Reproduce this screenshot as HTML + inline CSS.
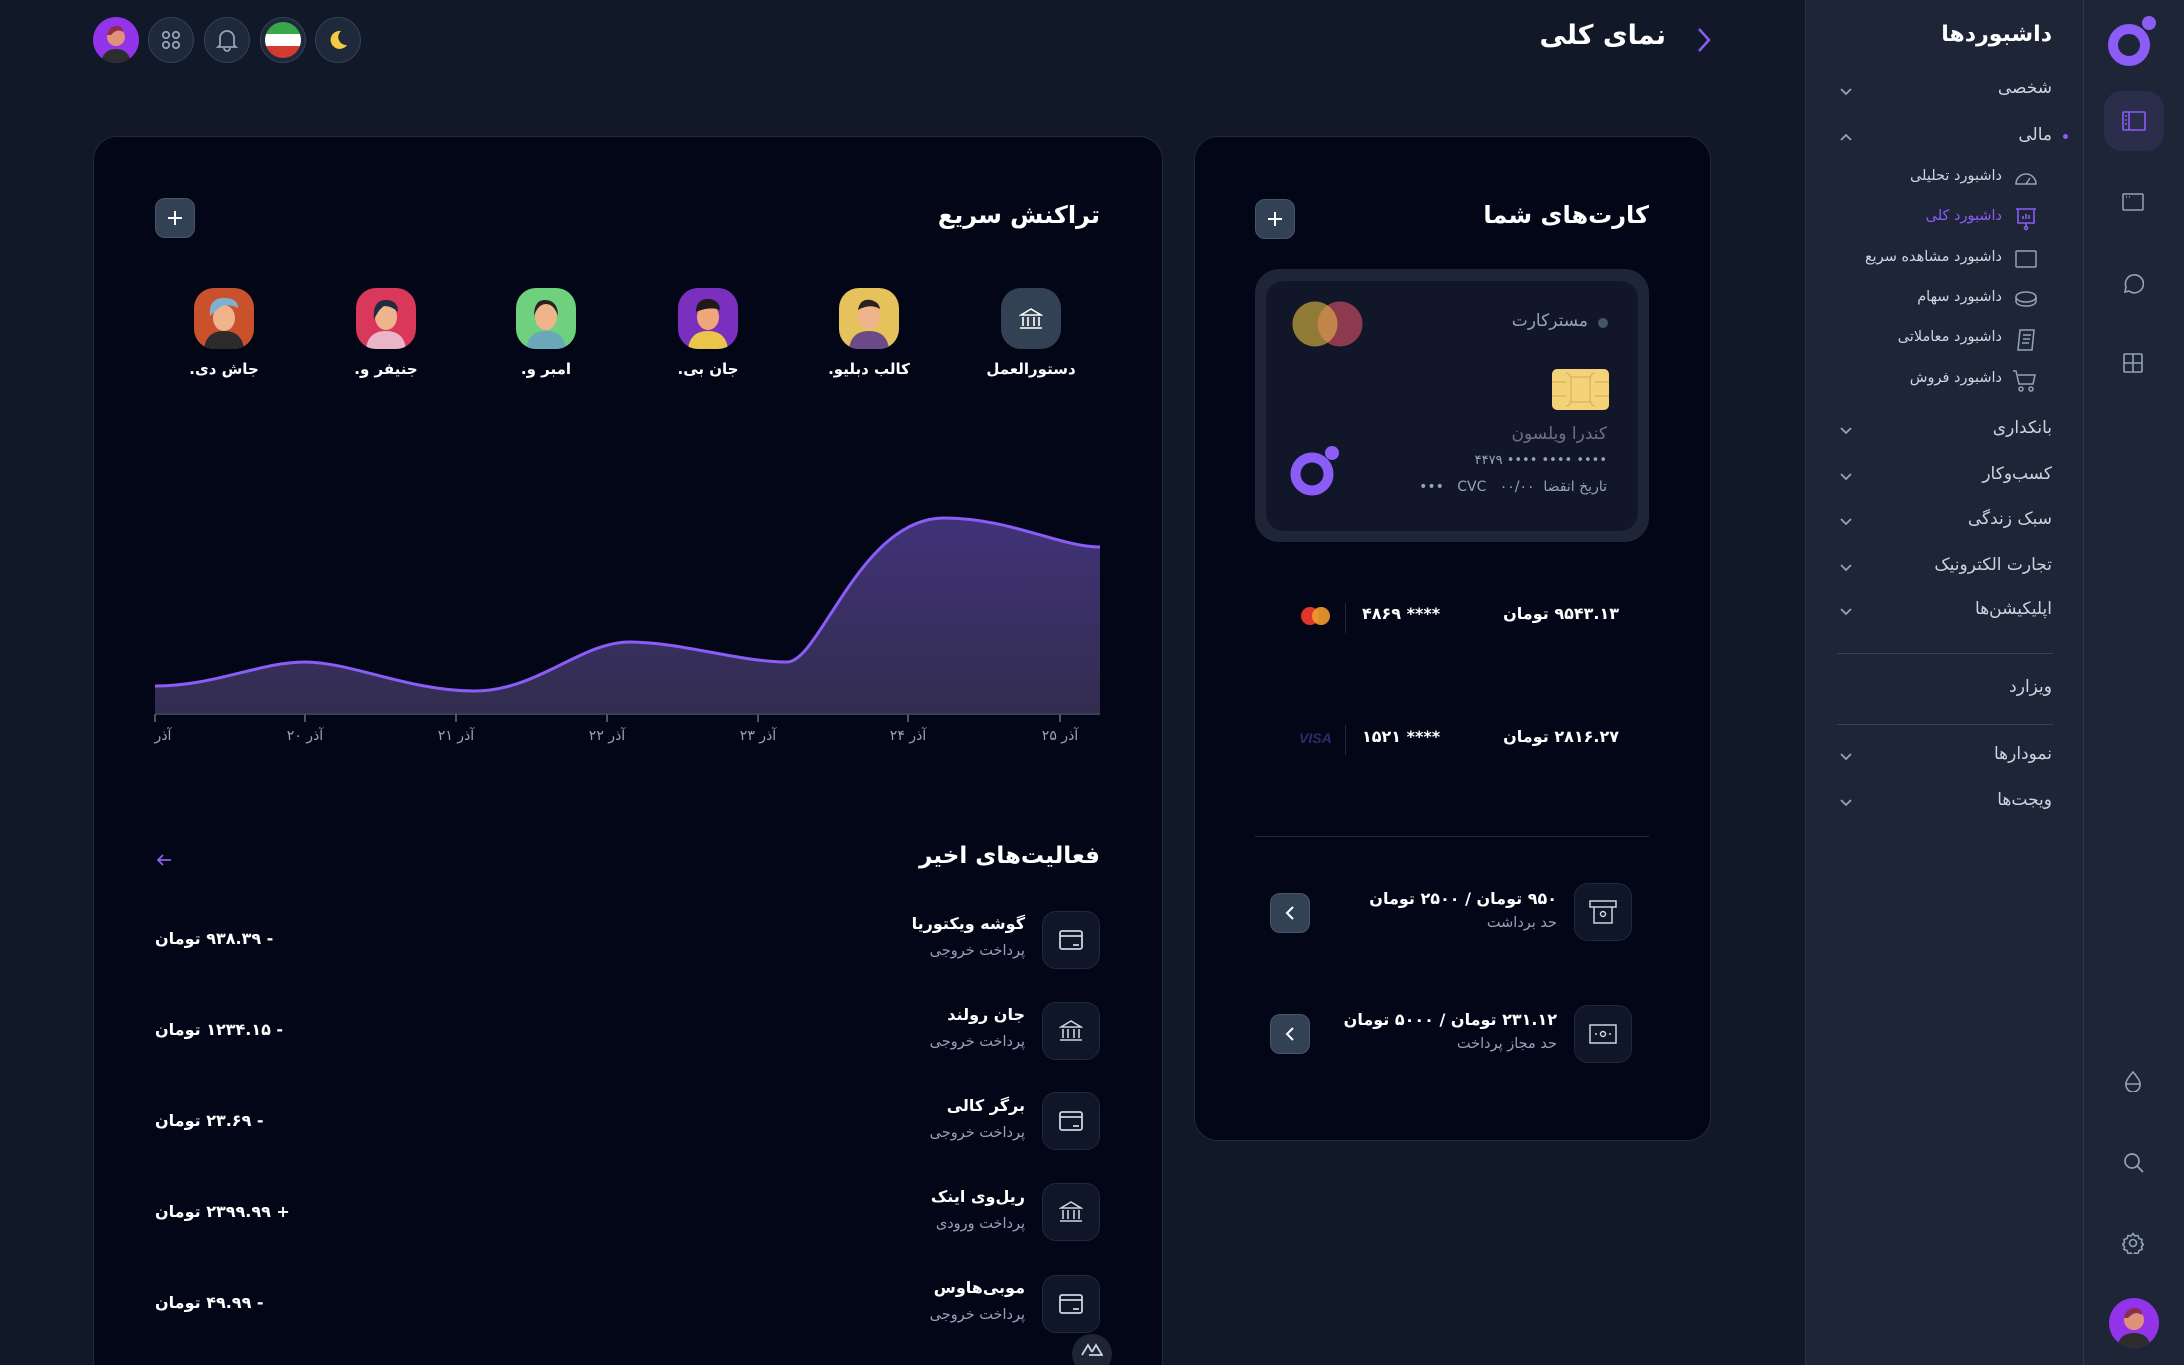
<!DOCTYPE html>
<html><head><meta charset="utf-8"><style>
*{margin:0;padding:0;box-sizing:border-box}
html{width:2184px;height:1365px;overflow:hidden}
body{width:2184px;height:1365px;background:#111827;overflow:hidden;position:relative;font-family:"DejaVu Sans","Liberation Sans",sans-serif;color:#fff}
.a{position:absolute;white-space:nowrap}
.r{direction:rtl}
.card{position:absolute;background:#030617;border:1px solid #1e293b;border-radius:24px}
.btn{position:absolute;width:40px;height:40px;border-radius:10px;background:#334155;border:1px solid #475569;display:flex;align-items:center;justify-content:center}
.circ{position:absolute;width:46px;height:46px;border-radius:50%;background:#1e293b;border:1px solid #334155;display:flex;align-items:center;justify-content:center}
.ico{position:absolute;width:58px;height:58px;border-radius:14px;background:#0f1627;border:1px solid #1e293b;display:flex;align-items:center;justify-content:center}
.sb{color:#cbd5e1;font-size:17px}
.sub{color:#94a3b8;font-size:14.5px}
.chev{position:absolute;left:1838px;width:16px;height:16px}
.av{position:absolute;width:60px;height:61px;border-radius:20px;overflow:hidden}
.lab{font-size:16px;font-weight:bold;transform:translateX(50%)}
.ax{font-size:14px;color:#9ca3af;transform:translateX(-50%)}
</style></head><body>

<!-- top bar -->
<div class="circ" style="left:93px;top:17px;background:#9333ea;border:none;overflow:hidden">
 <svg width="46" height="46"><circle cx="23" cy="20" r="9" fill="#e0917a"/><path d="M14 18q2-10 12-9 4 1 4 6-6-4-12 3z" fill="#8b2f4f"/><path d="M8 46q2-14 15-14 13 0 15 14z" fill="#2d2d2d"/></svg></div>
<div class="circ" style="left:148px;top:17px"><svg width="20" height="20" fill="none" stroke="#94a3b8" stroke-width="1.8"><circle cx="5" cy="5" r="3.2"/><circle cx="15" cy="5" r="3.2"/><circle cx="5" cy="15" r="3.2"/><circle cx="15" cy="15" r="3.2"/></svg></div>
<div class="circ" style="left:204px;top:17px"><svg width="22" height="24" fill="none" stroke="#94a3b8" stroke-width="1.8"><path d="M4 17V10a7 7 0 0114 0v7l2 2H2z"/><path d="M8 20a3 3 0 006 0"/></svg></div>
<div class="circ" style="left:260px;top:17px"><div style="width:36px;height:36px;border-radius:50%;overflow:hidden"><div style="height:12px;background:#3aa64a"></div><div style="height:12px;background:#fff"></div><div style="height:12px;background:#d43a2f"></div></div></div>
<div class="circ" style="left:315px;top:17px"><svg width="22" height="22"><path d="M14 2a9 9 0 1 0 6 14 8 8 0 0 1-6-14z" fill="#f6c945"/></svg></div>

<div class="a r" style="right:518px;top:20px;font-size:27px;font-weight:bold">نمای کلی</div>
<svg class="a" style="left:1695px;top:26px" width="18" height="28" fill="none" stroke="#8b5cf6" stroke-width="2.5"><path d="M4 3l10 11-10 11"/></svg>

<!-- left card -->
<div class="card" style="left:93px;top:136px;width:1070px;height:1260px"></div>
<div class="a r" style="right:1084px;top:201px;font-size:24px;font-weight:bold">تراکنش سریع</div>
<div class="btn" style="left:155px;top:198px"><svg width="16" height="16" stroke="#fff" stroke-width="2"><path d="M8 1v14M1 8h14"/></svg></div>

<div class="av" style="left:1001px;top:288px;background:#334155;display:flex;align-items:center;justify-content:center"><svg width="24" height="22" fill="none" stroke="#fff" stroke-width="1.6"><path d="M2 7L12 1l10 6zM4 9v9M9 9v9M15 9v9M20 9v9M1 20h22"/></svg></div>
<div class="av" style="left:839px;top:288px;background:#e5c25c"><svg width="60" height="61"><path d="M10 61q2-18 20-18 18 0 20 18z" fill="#6b4a8a"/><ellipse cx="30" cy="28" rx="11" ry="13" fill="#f0b48c"/><path d="M19 22q2-12 13-10 8 2 9 9-10-6-22 1z" fill="#2b2220"/></svg></div>
<div class="av" style="left:678px;top:288px;background:#7b2fbe"><svg width="60" height="61"><path d="M10 61q2-18 20-18 18 0 20 18z" fill="#e9c54a"/><ellipse cx="30" cy="29" rx="11" ry="13" fill="#f0a77c"/><path d="M18 24q0-14 14-13 10 2 10 11-10-4-24 2z" fill="#1f1a1a"/></svg></div>
<div class="av" style="left:516px;top:288px;background:#6fd17d"><svg width="60" height="61"><path d="M10 61q2-18 20-18 18 0 20 18z" fill="#6aa7b8"/><ellipse cx="30" cy="29" rx="11" ry="13" fill="#f0b48c"/><path d="M18 28q0-17 12-16 12 1 12 16-4-12-12-12-8 0-12 12z" fill="#2b2220"/></svg></div>
<div class="av" style="left:356px;top:288px;background:#d9385a"><svg width="60" height="61"><path d="M10 61q2-18 20-18 18 0 20 18z" fill="#eab5c8"/><ellipse cx="30" cy="29" rx="11" ry="13" fill="#f0b48c"/><path d="M18 32q-2-20 12-20 12 0 12 12-6-6-14-6-6 4-10 14z" fill="#1f2a44"/></svg></div>
<div class="av" style="left:194px;top:288px;background:#c9512b"><svg width="60" height="61"><path d="M10 61q2-18 20-18 18 0 20 18z" fill="#2b2b2b"/><ellipse cx="30" cy="30" rx="11" ry="13" fill="#f0b48c"/><path d="M16 28q-2-18 14-18 14 0 14 10-8-4-16-2-6 4-12 10z" fill="#7fb0cf"/></svg></div>

<div class="a r lab" style="right:1153px;top:360px;font-size:15px">دستورالعمل</div>
<div class="a r lab" style="right:1315px;top:360px;font-size:15px">کالب دبلیو.</div>
<div class="a r lab" style="right:1476px;top:360px;font-size:15px">جان بی.</div>
<div class="a r lab" style="right:1638px;top:360px;font-size:15px">امبر و.</div>
<div class="a r lab" style="right:1798px;top:360px;font-size:15px">جنیفر و.</div>
<div class="a r lab" style="right:1960px;top:360px;font-size:15px">جاش دی.</div>

<svg class="a" style="left:0;top:0" width="1200" height="760">
<defs><linearGradient id="g" x1="0" y1="0" x2="0" y2="1"><stop offset="0" stop-color="#4c3a8a" stop-opacity=".85"/><stop offset="1" stop-color="#3a3458" stop-opacity=".85"/></linearGradient></defs>
<path d="M155 686C215 686 260 662 305 662S410 691 474 691 580 642 630 642 740 662 787 662C820 662 860 518 944 518 1010 518 1060 547 1100 547V713H155z" fill="url(#g)"/>
<path d="M155 686C215 686 260 662 305 662S410 691 474 691 580 642 630 642 740 662 787 662C820 662 860 518 944 518 1010 518 1060 547 1100 547" fill="none" stroke="#8b5cf6" stroke-width="3"/>
<path d="M155 714H1100" stroke="#374151" stroke-width="2"/>
<g stroke="#4b5563" stroke-width="2"><path d="M155 714v8M305 714v8M456 714v8M607 714v8M758 714v8M908 714v8M1060 714v8"/></g>
</svg>
<div class="a ax r" style="left:163px;top:728px">آذر</div>
<div class="a ax r" style="left:305px;top:728px">آذر ۲۰</div>
<div class="a ax r" style="left:456px;top:728px">آذر ۲۱</div>
<div class="a ax r" style="left:607px;top:728px">آذر ۲۲</div>
<div class="a ax r" style="left:758px;top:728px">آذر ۲۳</div>
<div class="a ax r" style="left:908px;top:728px">آذر ۲۴</div>
<div class="a ax r" style="left:1060px;top:728px">آذر ۲۵</div>

<div class="a r" style="right:1084px;top:843px;font-size:23px;font-weight:bold">فعالیت‌های اخیر</div>
<svg class="a" style="left:156px;top:852px" width="16" height="16" fill="none" stroke="#8b5cf6" stroke-width="1.8"><path d="M15 8H2M7 3L2 8l5 5"/></svg>

<!-- activity rows -->
<div class="ico" style="left:1042px;top:911px"><svg width="24" height="20" fill="none" stroke="#cbd5e1" stroke-width="1.8"><rect x="1" y="1" width="22" height="18" rx="2"/><path d="M1 6h22M14 15h6"/></svg></div>
<div class="ico" style="left:1042px;top:1002px"><svg width="24" height="22" fill="none" stroke="#cbd5e1" stroke-width="1.6"><path d="M2 7L12 1l10 6zM4 9v9M9 9v9M15 9v9M20 9v9M1 20h22"/></svg></div>
<div class="ico" style="left:1042px;top:1092px"><svg width="24" height="20" fill="none" stroke="#cbd5e1" stroke-width="1.8"><rect x="1" y="1" width="22" height="18" rx="2"/><path d="M1 6h22M14 15h6"/></svg></div>
<div class="ico" style="left:1042px;top:1183px"><svg width="24" height="22" fill="none" stroke="#cbd5e1" stroke-width="1.6"><path d="M2 7L12 1l10 6zM4 9v9M9 9v9M15 9v9M20 9v9M1 20h22"/></svg></div>
<div class="ico" style="left:1042px;top:1275px"><svg width="24" height="20" fill="none" stroke="#cbd5e1" stroke-width="1.8"><rect x="1" y="1" width="22" height="18" rx="2"/><path d="M1 6h22M14 15h6"/></svg></div>

<div class="a r" style="right:1159px;top:914px;font-size:16px;font-weight:bold">گوشه ویکتوریا</div><div class="a r sub" style="right:1159px;top:943px">پرداخت خروجی</div>
<div class="a r" style="right:1159px;top:1005px;font-size:16px;font-weight:bold">جان رولند</div><div class="a r sub" style="right:1159px;top:1034px">پرداخت خروجی</div>
<div class="a r" style="right:1159px;top:1096px;font-size:16px;font-weight:bold">برگر کالی</div><div class="a r sub" style="right:1159px;top:1125px">پرداخت خروجی</div>
<div class="a r" style="right:1159px;top:1187px;font-size:16px;font-weight:bold">ریل‌وی اینک</div><div class="a r sub" style="right:1159px;top:1216px">پرداخت ورودی</div>
<div class="a r" style="right:1159px;top:1278px;font-size:16px;font-weight:bold">موبی‌هاوس</div><div class="a r sub" style="right:1159px;top:1307px">پرداخت خروجی</div>

<div class="a r" style="left:155px;top:929px;font-size:16px;font-weight:bold">- ۹۳۸.۳۹ تومان</div>
<div class="a r" style="left:155px;top:1020px;font-size:16px;font-weight:bold">- ۱۲۳۴.۱۵ تومان</div>
<div class="a r" style="left:155px;top:1111px;font-size:16px;font-weight:bold">- ۲۳.۶۹ تومان</div>
<div class="a r" style="left:155px;top:1202px;font-size:16px;font-weight:bold">+ ۲۳۹۹.۹۹ تومان</div>
<div class="a r" style="left:155px;top:1293px;font-size:16px;font-weight:bold">- ۴۹.۹۹ تومان</div>
<div class="a" style="left:1072px;top:1334px;width:40px;height:40px;border-radius:50%;background:#1e2533;display:flex;justify-content:center;padding-top:8px"><svg width="22" height="14" fill="none" stroke="#cbd5e1" stroke-width="1.8"><path d="M1 13L7 3l4 7M8 13h13L15 3l-4 7"/></svg></div>

<!-- right card -->
<div class="card" style="left:1194px;top:136px;width:517px;height:1005px"></div>
<div class="a r" style="right:535px;top:201px;font-size:24px;font-weight:bold">کارت‌های شما</div>
<div class="btn" style="left:1255px;top:199px"><svg width="16" height="16" stroke="#fff" stroke-width="2"><path d="M8 1v14M1 8h14"/></svg></div>

<div class="a" style="left:1255px;top:269px;width:394px;height:273px;border-radius:24px;background:#1e2536"></div>
<div class="a" style="left:1266px;top:281px;width:372px;height:250px;border-radius:18px;background:#111729"></div>
<svg class="a" style="left:1290px;top:300px" width="76" height="48"><circle cx="25" cy="24" r="22.5" fill="#8f7a36"/><circle cx="50" cy="24" r="22.5" fill="#8e3a4e"/><path d="M37.5 5.3a22.5 22.5 0 0 1 0 37.4 22.5 22.5 0 0 1 0-37.4z" fill="#c2864a"/></svg>
<div class="a" style="left:1598px;top:318px;width:10px;height:10px;border-radius:50%;background:#475569"></div>
<div class="a r" style="right:596px;top:311px;font-size:17px;color:#94a3b8">مسترکارت</div>
<svg class="a" style="left:1552px;top:369px" width="57" height="41"><rect width="57" height="41" rx="5" fill="#f4d27a"/><g fill="none" stroke="#d8b25a" stroke-width="1.2"><path d="M0 13h14M0 27h14M43 13h14M43 27h14M14 4q5 0 5 9v15q0 9-5 9M43 4q-5 0-5 9v15q0 9 5 9M19 8h19M19 33h19"/></g></svg>
<div class="a r" style="right:577px;top:424px;font-size:17px;color:#6b7280">کندرا ویلسون</div>
<div class="a r" style="right:577px;top:453px;font-size:13px;color:#94a3b8">•••• •••• •••• ۴۴۷۹</div>
<div class="a r" style="right:577px;top:479px;font-size:14px;color:#94a3b8">تاریخ انقضا &nbsp;۰۰/۰۰ &nbsp; CVC &nbsp; •••</div>
<svg class="a" style="left:1290px;top:444px" width="52" height="52"><circle cx="22" cy="30" r="16.5" fill="none" stroke="#8b5cf6" stroke-width="10"/><circle cx="42" cy="9" r="7" fill="#8b5cf6"/></svg>

<div class="a r" style="right:565px;top:604px;font-size:16px;font-weight:bold">۹۵۴۳.۱۳ تومان</div>
<div class="a r" style="left:1362px;top:604px;font-size:16px;font-weight:bold">**** ۴۸۶۹</div>
<div class="a" style="left:1345px;top:603px;width:1px;height:30px;background:#1e293b"></div>
<svg class="a" style="left:1300px;top:605px" width="32" height="22"><circle cx="10" cy="11" r="9" fill="#e0362c"/><circle cx="21" cy="11" r="9" fill="#f39c2f" fill-opacity=".9"/></svg>
<div class="a r" style="right:565px;top:727px;font-size:16px;font-weight:bold">۲۸۱۶.۲۷ تومان</div>
<div class="a r" style="left:1362px;top:727px;font-size:16px;font-weight:bold">**** ۱۵۲۱</div>
<div class="a" style="left:1345px;top:725px;width:1px;height:30px;background:#1e293b"></div>
<div class="a" style="left:1299px;top:730px;font-family:'Liberation Sans';font-style:italic;font-weight:bold;font-size:14px;color:#2f2a6b">VISA</div>

<div class="a" style="left:1255px;top:836px;width:394px;height:1px;background:#1e293b"></div>

<div class="ico" style="left:1574px;top:883px;background:#0f1627"><svg width="28" height="24" fill="none" stroke="#cbd5e1" stroke-width="1.5"><path d="M1 1h26v6H1zM5 7v16h18V7"/><circle cx="14" cy="14" r="2.5"/></svg></div>
<div class="a r" style="right:627px;top:889px;font-size:16px;font-weight:bold">۹۵۰ تومان / ۲۵۰۰ تومان</div>
<div class="a r sub" style="right:627px;top:915px">حد برداشت</div>
<div class="btn" style="left:1270px;top:893px"><svg width="10" height="14" fill="none" stroke="#fff" stroke-width="2"><path d="M8 1L2 7l6 6"/></svg></div>

<div class="ico" style="left:1574px;top:1005px"><svg width="28" height="20" fill="none" stroke="#cbd5e1" stroke-width="1.5"><rect x="1" y="1" width="26" height="18"/><circle cx="14" cy="10" r="2.5"/><path d="M6 10h2M20 10h2"/></svg></div>
<div class="a r" style="right:627px;top:1010px;font-size:16px;font-weight:bold">۲۳۱.۱۲ تومان / ۵۰۰۰ تومان</div>
<div class="a r sub" style="right:627px;top:1036px">حد مجاز پرداخت</div>
<div class="btn" style="left:1270px;top:1014px"><svg width="10" height="14" fill="none" stroke="#fff" stroke-width="2"><path d="M8 1L2 7l6 6"/></svg></div>

<!-- sidebar -->
<div class="a" style="left:1805px;top:0;width:379px;height:1365px;background:#1e2536"></div>
<div class="a" style="left:2083px;top:0;width:1px;height:1365px;background:#2f3648"></div>
<div class="a" style="left:1805px;top:0;width:1px;height:1365px;background:#2a3142"></div>
<div class="a r" style="right:132px;top:22px;font-size:22px;font-weight:bold">داشبوردها</div>

<div class="a r sb" style="right:132px;top:78px">شخصی</div>
<div class="a r sb" style="right:132px;top:125px">مالی</div>
<div class="a" style="left:2063px;top:134px;width:5px;height:5px;border-radius:50%;background:#8b5cf6"></div>
<svg class="chev" style="top:83px" fill="none" stroke="#94a3b8" stroke-width="1.8"><path d="M3 6l5 5 5-5"/></svg>
<svg class="chev" style="top:129px" fill="none" stroke="#94a3b8" stroke-width="1.8"><path d="M3 11l5-5 5 5"/></svg>

<div class="a r sub" style="right:182px;top:168px;color:#cbd5e1">داشبورد تحلیلی</div>
<div class="a r sub" style="right:182px;top:208px;color:#8b5cf6">داشبورد کلی</div>
<div class="a r sub" style="right:182px;top:249px;color:#cbd5e1">داشبورد مشاهده سریع</div>
<div class="a r sub" style="right:182px;top:289px;color:#cbd5e1">داشبورد سهام</div>
<div class="a r sub" style="right:182px;top:329px;color:#cbd5e1">داشبورد معاملاتی</div>
<div class="a r sub" style="right:182px;top:370px;color:#cbd5e1">داشبورد فروش</div>
<svg class="a" style="left:2014px;top:168px" width="24" height="20" fill="none" stroke="#94a3b8" stroke-width="1.5"><path d="M2 16a10 10 0 0120 0zM12 16l4-6"/></svg>
<svg class="a" style="left:2014px;top:207px" width="24" height="24" fill="none" stroke="#8b5cf6" stroke-width="1.6"><path d="M2 2h20M4 2v14h16V2M12 16v4"/><circle cx="12" cy="21" r="1.5"/><path d="M9 12v-3M12 12V7M15 12v-4"/></svg>
<svg class="a" style="left:2014px;top:249px" width="24" height="20" fill="none" stroke="#94a3b8" stroke-width="1.5"><rect x="2" y="2" width="20" height="16" rx="1"/></svg>
<svg class="a" style="left:2014px;top:289px" width="24" height="20" fill="none" stroke="#94a3b8" stroke-width="1.5"><ellipse cx="12" cy="8" rx="10" ry="5"/><path d="M2 8v4c0 3 4 5 10 5s10-2 10-5V8"/></svg>
<svg class="a" style="left:2014px;top:328px" width="24" height="24" fill="none" stroke="#94a3b8" stroke-width="1.5"><path d="M6 2h14l-2 20H4zM9 7h8M9 11h7M8 15h7"/></svg>
<svg class="a" style="left:2012px;top:369px" width="26" height="24" fill="none" stroke="#94a3b8" stroke-width="1.5"><path d="M1 2h3l3 13h14l2-9H6"/><circle cx="9" cy="20" r="2"/><circle cx="19" cy="20" r="2"/></svg>

<div class="a r sb" style="right:132px;top:418px">بانکداری</div>
<div class="a r sb" style="right:132px;top:464px">کسب‌وکار</div>
<div class="a r sb" style="right:132px;top:509px">سبک زندگی</div>
<div class="a r sb" style="right:132px;top:555px">تجارت الکترونیک</div>
<div class="a r sb" style="right:132px;top:599px">اپلیکیشن‌ها</div>
<svg class="chev" style="top:422px" fill="none" stroke="#94a3b8" stroke-width="1.8"><path d="M3 6l5 5 5-5"/></svg>
<svg class="chev" style="top:468px" fill="none" stroke="#94a3b8" stroke-width="1.8"><path d="M3 6l5 5 5-5"/></svg>
<svg class="chev" style="top:513px" fill="none" stroke="#94a3b8" stroke-width="1.8"><path d="M3 6l5 5 5-5"/></svg>
<svg class="chev" style="top:559px" fill="none" stroke="#94a3b8" stroke-width="1.8"><path d="M3 6l5 5 5-5"/></svg>
<svg class="chev" style="top:603px" fill="none" stroke="#94a3b8" stroke-width="1.8"><path d="M3 6l5 5 5-5"/></svg>
<div class="a" style="left:1837px;top:653px;width:216px;height:1px;background:#334155"></div>
<div class="a r sb" style="right:132px;top:677px">ویزارد</div>
<div class="a" style="left:1837px;top:724px;width:216px;height:1px;background:#334155"></div>
<div class="a r sb" style="right:132px;top:744px">نمودارها</div>
<div class="a r sb" style="right:132px;top:790px">ویجت‌ها</div>
<svg class="chev" style="top:748px" fill="none" stroke="#94a3b8" stroke-width="1.8"><path d="M3 6l5 5 5-5"/></svg>
<svg class="chev" style="top:794px" fill="none" stroke="#94a3b8" stroke-width="1.8"><path d="M3 6l5 5 5-5"/></svg>

<!-- rail -->
<svg class="a" style="left:2108px;top:14px" width="50" height="54"><circle cx="21" cy="31" r="16" fill="none" stroke="#8b5cf6" stroke-width="10"/><circle cx="41" cy="9" r="7" fill="#8b5cf6"/></svg>
<div class="a" style="left:2104px;top:91px;width:60px;height:60px;border-radius:18px;background:#2b2e4a;display:flex;align-items:center;justify-content:center"><svg width="24" height="20" fill="none" stroke="#8b5cf6" stroke-width="1.6"><rect x="1" y="1" width="22" height="18" rx="1"/><path d="M7 1v18M3 5h2M3 9h2M3 13h2"/></svg></div>
<svg class="a" style="left:2122px;top:192px" width="22" height="20" fill="none" stroke="#94a3b8" stroke-width="1.5"><rect x="1" y="2" width="20" height="16" rx="1"/><path d="M4 5h1M7 5h1"/></svg>
<svg class="a" style="left:2122px;top:272px" width="22" height="22" fill="none" stroke="#94a3b8" stroke-width="1.6"><path d="M3 20l1-5a9 9 0 1 1 3 4z"/></svg>
<svg class="a" style="left:2123px;top:353px" width="20" height="20" fill="none" stroke="#94a3b8" stroke-width="1.6"><rect x="1" y="1" width="18" height="18" rx="1"/><path d="M10 1v18M1 10h18"/></svg>
<svg class="a" style="left:2124px;top:1070px" width="18" height="22" fill="none" stroke="#94a3b8" stroke-width="1.6"><path d="M9 2q8 9 7 13a7 7 0 0 1-14 0q-1-4 7-13zM2 14h14"/></svg>
<svg class="a" style="left:2123px;top:1152px" width="22" height="22" fill="none" stroke="#94a3b8" stroke-width="1.7"><circle cx="9" cy="9" r="7"/><path d="M14 14l6 6"/></svg>
<svg class="a" style="left:2122px;top:1232px" width="22" height="22" fill="none" stroke="#94a3b8" stroke-width="1.6"><circle cx="11" cy="11" r="3.5"/><path d="M11 1.5l2 2.5 3-.5 1 3 3 1-.5 3 2 2-2 2 .5 3-3 1-1 3-3-.5-2 2.5-2-2.5-3 .5-1-3-3-1 .5-3-2-2 2-2-.5-3 3-1 1-3 3 .5z"/></svg>
<div class="a" style="left:2109px;top:1298px;width:50px;height:50px;border-radius:50%;background:#9333ea;overflow:hidden"><svg width="50" height="50"><circle cx="25" cy="22" r="10" fill="#e0917a"/><path d="M15 20q2-11 13-10 5 1 5 7-7-5-14 3z" fill="#8b2f4f"/><path d="M8 50q2-15 17-15 15 0 17 15z" fill="#2d2d2d"/></svg></div>

</body></html>
